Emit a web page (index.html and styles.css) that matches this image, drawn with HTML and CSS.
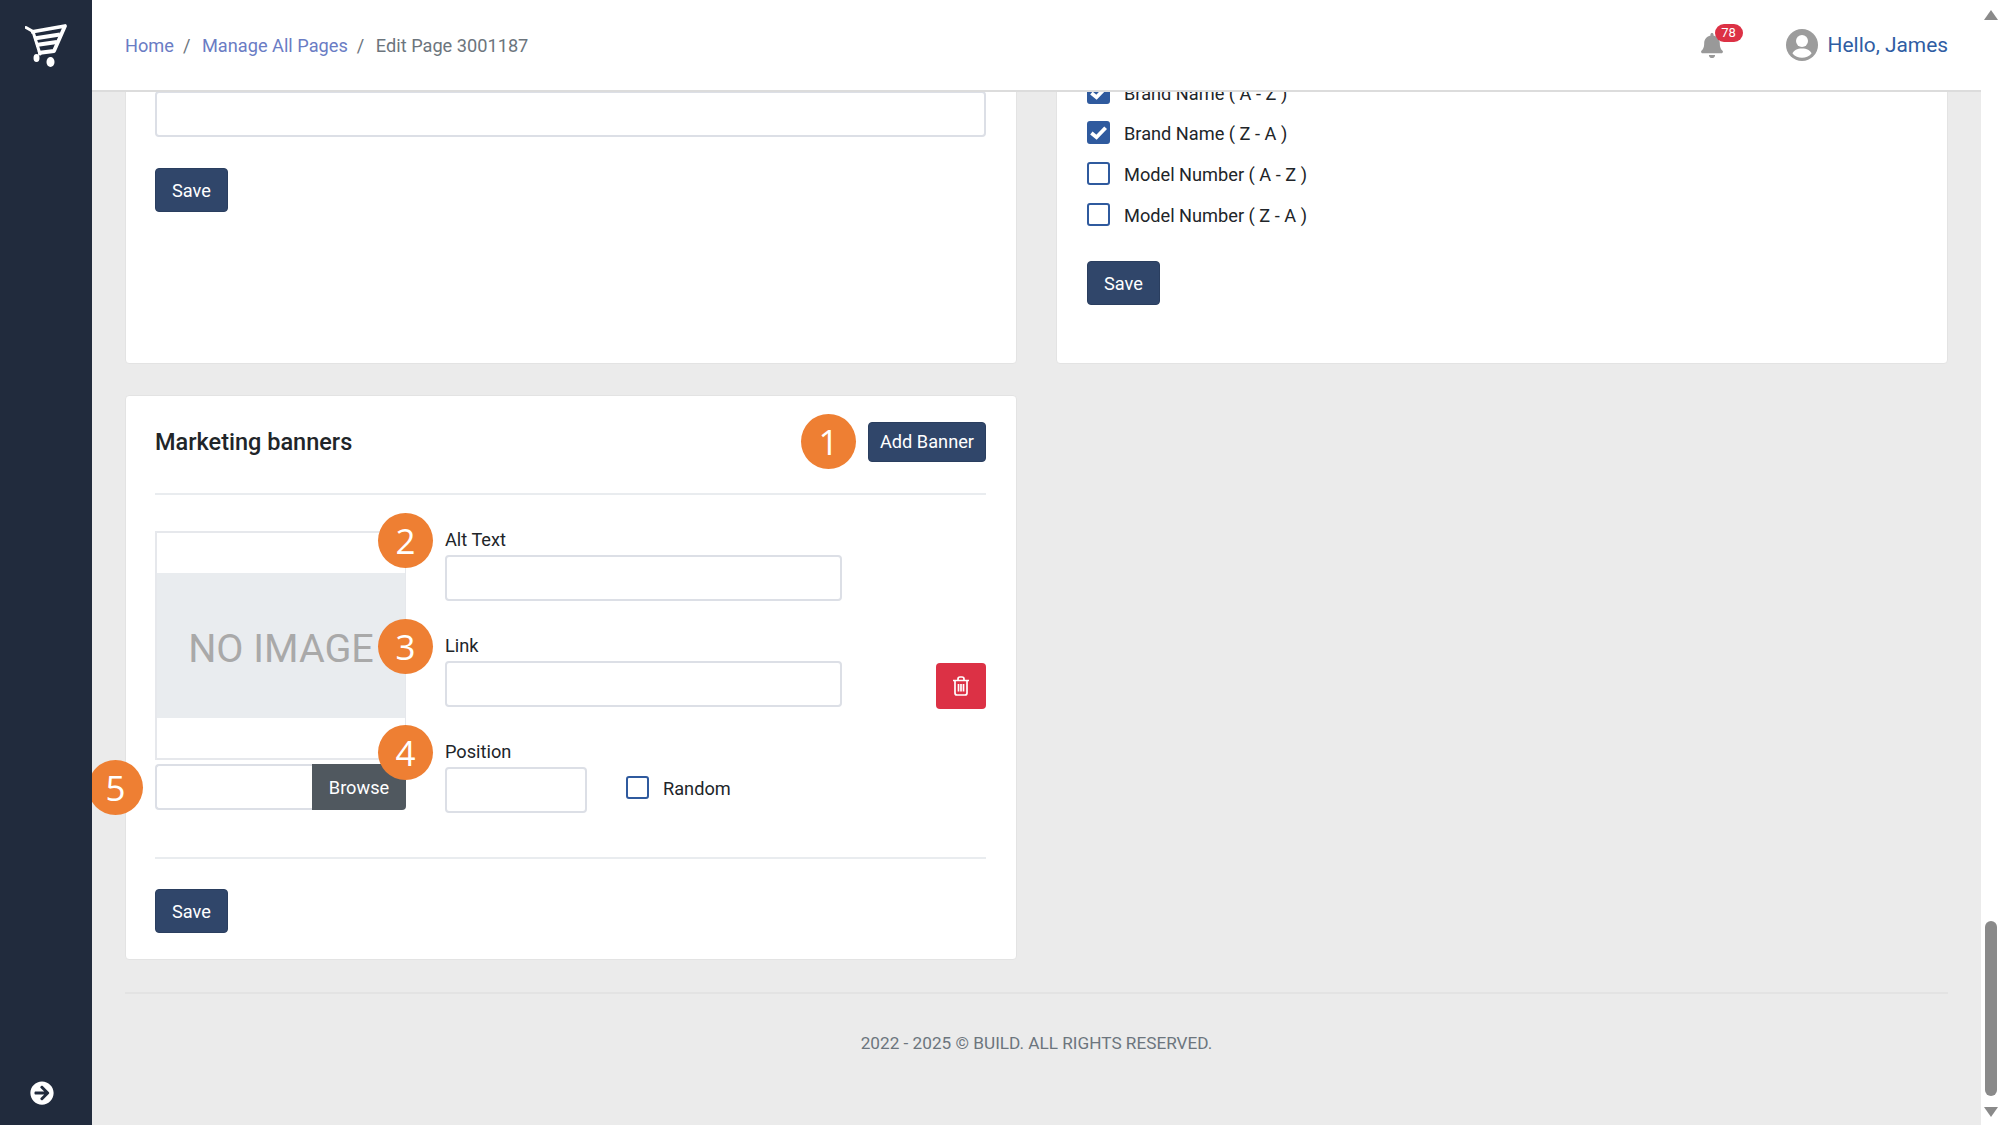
FILE: index.html
```html
<!DOCTYPE html>
<html>
<head>
  <title>Edit Page 3001187</title>
  <link rel="stylesheet" href="styles.css">
</head>
<body>
  <div class="app">
    <aside class="sidebar">
      <svg class="logo" viewBox="0 0 42 44" width="42" height="44">
        <path d="M1 3.5 L8 7.5 L15 30" fill="none" stroke="#fff" stroke-width="3" stroke-linecap="round"/>
        <path d="M6 8 L40 2 L29 27 L13 29" fill="none" stroke="#fff" stroke-width="3.8" stroke-linejoin="round"/>
        <path d="M9 14.5 L35 10.5 M11 21 L32 18" stroke="#fff" stroke-width="4"/>
        <ellipse cx="11.5" cy="34" rx="3" ry="4" fill="#fff"/>
        <ellipse cx="25.5" cy="38" rx="4" ry="5" fill="#fff"/>
      </svg>
      <svg class="expand" viewBox="0 0 512 512" width="24" height="24">
        <path fill="#fff" d="M256 8c137 0 248 111 248 248S393 504 256 504 8 393 8 256 119 8 256 8zm-28.9 143.6l75.5 72.4H120c-13.3 0-24 10.7-24 24v16c0 13.3 10.7 24 24 24h182.6l-75.5 72.4c-9.7 9.3-9.9 24.8-.4 34.3l11 10.9c9.4 9.4 24.6 9.4 33.9 0L404.3 273c9.4-9.4 9.4-24.6 0-33.9L271.6 106.3c-9.4-9.4-24.6-9.4-33.9 0l-11 10.9c-9.3 9.6-9.1 25.1.4 34.4z"/>
      </svg>
    </aside>

    <div class="main">
      <header class="topbar">
        <nav class="breadcrumb">
          <a href="#">Home</a><span class="sep">/</span>
          <a href="#">Manage All Pages</a><span class="sep">/</span>
          <span class="current">Edit Page 3001187</span>
        </nav>
        <div class="topbar-right">
          <div class="bell">
            <svg viewBox="0 0 448 512" width="22" height="25">
              <path fill="#999" d="M224 512c35.32 0 63.97-28.65 63.97-64H160.03c0 35.35 28.65 64 63.97 64zm215.39-149.71c-19.32-20.76-55.47-51.99-55.47-154.29 0-77.7-54.48-139.9-127.94-155.16V32c0-17.67-14.32-32-31.98-32s-31.98 14.33-31.98 32v20.84C118.56 68.1 64.08 130.3 64.08 208c0 102.3-36.15 133.53-55.47 154.29-6 6.45-8.66 14.16-8.61 21.71.11 16.4 12.98 32 32.1 32h383.8c19.12 0 32-15.6 32.1-32 .05-7.55-2.61-15.27-8.61-21.71z"/>
            </svg>
            <span class="bell-count">78</span>
          </div>
          <svg class="avatar" viewBox="0 0 32 32" width="32" height="32">
            <circle cx="16" cy="16" r="16" fill="#9c9c9c"/>
            <circle cx="16" cy="12" r="6" fill="#fff"/>
            <path d="M6.5 24.5 C8 21 11 19.5 16 19.5 C21 19.5 24 21 25.5 24.5 C23 27.5 19.5 28.8 16 28.8 C12.5 28.8 9 27.5 6.5 24.5 Z" fill="#fff"/>
          </svg>
          <a class="user-name" href="#">Hello, James</a>
        </div>
      </header>

      <div class="content">
        <div class="card-grid">
          <section class="card card-top">
            <input class="field" type="text">
            <button class="btn save-top">Save</button>
          </section>

          <section class="card card-top card-sort">
            <div class="sort-list">
              <label class="check-row">
                <span class="check checked"><svg viewBox="0 0 16 16" width="19" height="19"><path d="M2 8.5 L6.3 12 L14 4" fill="none" stroke="#fff" stroke-width="3.2"/></svg></span>
                Brand Name ( A - Z )
              </label>
              <label class="check-row">
                <span class="check checked"><svg viewBox="0 0 16 16" width="19" height="19"><path d="M2 8.5 L6.3 12 L14 4" fill="none" stroke="#fff" stroke-width="3.2"/></svg></span>
                Brand Name ( Z - A )
              </label>
              <label class="check-row"><span class="check"></span>Model Number ( A - Z )</label>
              <label class="check-row"><span class="check"></span>Model Number ( Z - A )</label>
            </div>
            <button class="btn">Save</button>
          </section>

          <section class="card card-banners">
            <div class="card-head">
              <h2>Marketing banners</h2>
              <button class="btn btn-add">Add Banner</button>
            </div>

            <div class="banner-row">
              <div class="banner-image">
                <div class="image-box">
                  <div class="no-image">NO IMAGE</div>
                </div>
                <div class="file-pick">
                  <span class="file-name"></span>
                  <span class="file-browse">Browse</span>
                </div>
              </div>

              <div class="banner-fields">
                <div class="form-group">
                  <label>Alt Text</label>
                  <input class="field" type="text">
                </div>
                <div class="form-group">
                  <label>Link</label>
                  <input class="field" type="text">
                </div>
                <div class="position-row">
                  <div class="form-group">
                    <label>Position</label>
                    <input class="field field-small" type="text">
                  </div>
                  <label class="check-row check-random"><span class="check"></span>Random</label>
                </div>
              </div>

              <button class="btn-delete">
                <svg viewBox="0 0 18 20" width="18" height="20">
                  <path d="M1 4.5 H17 M6 4.5 V3 C6 1.8 6.8 1 8 1 H10 C11.2 1 12 1.8 12 3 V4.5 M3 4.5 V17 C3 18.2 3.8 19 5 19 H13 C14.2 19 15 18.2 15 17 V4.5 M6.5 8 V15.5 M9 8 V15.5 M11.5 8 V15.5" fill="none" stroke="#fff" stroke-width="1.7"/>
                </svg>
              </button>
            </div>

            <button class="btn">Save</button>

            <span class="step step-1">1</span>
            <span class="step step-2">2</span>
            <span class="step step-3">3</span>
            <span class="step step-4">4</span>
            <span class="step step-5">5</span>
          </section>
        </div>

        <footer class="footer">2022 - 2025 © BUILD. ALL RIGHTS RESERVED.</footer>
      </div>
    </div>

    <div class="scrollbar">
      <span class="arrow-up"></span>
      <span class="thumb"></span>
      <span class="arrow-down"></span>
    </div>
  </div>
</body>
</html>
```

FILE: styles.css
```css
* {
  box-sizing: border-box;
}

body, html {
  height: 100%;
  margin: 0;
}

body {
  font-family: Roboto, "Liberation Sans", sans-serif;
  font-size: 18.2px;
  color: #212529;
  overflow: hidden;
}

.app {
  display: flex;
  height: 1125px;
  background: #ebebeb;
}

/* sidebar */
.sidebar {
  width: 92px;
  flex-shrink: 0;
  background: #212b3d;
  display: flex;
  flex-direction: column;
  justify-content: space-between;
  align-items: flex-start;
  padding: 24px 0 20px 25px;
}

.expand {
  margin-left: 5px;
}

/* top bar */
.main {
  flex: 1;
  min-width: 0;
  display: flex;
  flex-direction: column;
}

.topbar {
  height: 92px;
  flex-shrink: 0;
  background: #fff;
  border-bottom: 2px solid #dcdcdc;
  display: flex;
  align-items: center;
  justify-content: space-between;
  padding: 0 33px 0 33px;
  position: relative;
  z-index: 2;
}

.breadcrumb {
  color: #6c757d;
}

.breadcrumb a {
  color: #6a7cc4;
  text-decoration: none;
}

.breadcrumb .sep {
  margin: 0 7px 0 9px;
}

.topbar-right {
  display: flex;
  align-items: center;
}

.bell {
  position: relative;
  display: flex;
  margin-right: 63px;
}

.bell-count {
  position: absolute;
  left: 14px;
  top: -9px;
  width: 28px;
  height: 18px;
  border-radius: 9px;
  background: #dc3145;
  color: #fff;
  font-size: 13px;
  line-height: 18px;
  text-align: center;
}

.user-name {
  margin-left: 10px;
  font-size: 20.9px;
  color: #2f5da3;
  text-decoration: none;
}

/* scrolled area */
.content {
  flex: 1;
  min-height: 0;
  overflow: hidden;
  padding: 0 33px;
}

.card-grid {
  display: grid;
  grid-template-columns: 892px 892px;
  column-gap: 39px;
  row-gap: 31px;
  margin-top: -32px;
}

.card {
  background: #fff;
  border: 1px solid #e3e3e3;
  border-radius: 4px;
  padding: 30px 30px 0 29px;
}

.card-top {
  height: 304px;
}

.card-sort {
  padding-left: 30px;
}

.field {
  display: block;
  width: 100%;
  height: 46px;
  background: #fff;
  border: 2px solid #dcdfe6;
  border-radius: 4px;
  outline: none;
}

.field-small {
  width: 142px;
}

.btn {
  display: block;
  height: 44px;
  padding: 0 16px;
  background: #30466a;
  border: 1px solid #2a3e5f;
  border-radius: 4px;
  color: #fff;
  font-family: inherit;
  font-size: 18.2px;
}

.save-top {
  margin-top: 31px;
}

/* sort options */
.sort-list {
  margin-top: -10px;
  margin-bottom: 34px;
}

.check-row {
  display: flex;
  align-items: center;
  height: 24px;
  margin-bottom: 16.7px;
  color: #212529;
}

.check {
  width: 23px;
  height: 23px;
  margin-right: 14px;
  margin-bottom: 2px;
  border: 2px solid #2f5a9e;
  border-radius: 3px;
  background: #fff;
  display: flex;
  align-items: center;
  justify-content: center;
  flex-shrink: 0;
}

.check.checked {
  background: #2f5a9e;
}

/* marketing banners */
.card-banners {
  position: relative;
  padding-top: 26px;
  padding-bottom: 24px;
  height: 565px;
}

.card-head {
  display: flex;
  align-items: center;
  justify-content: space-between;
  height: 73px;
  padding-bottom: 32px;
  border-bottom: 2px solid #e9ecef;
}

.card-head h2 {
  margin: 0;
  font-size: 23.5px;
  font-weight: 500;
  color: #212529;
}

.btn-add {
  height: 40px;
  padding: 0 11px;
}

.banner-row {
  display: flex;
  align-items: flex-start;
  margin-top: 36px;
  height: 328px;
  margin-bottom: 30px;
  border-bottom: 2px solid #e9ecef;
}

.banner-image {
  width: 251px;
  flex-shrink: 0;
  margin-right: 39px;
}

.image-box {
  height: 229px;
  border: 2px solid #e6e8ec;
  border-right-width: 1px;
  display: flex;
  align-items: center;
}

.no-image {
  width: 100%;
  height: 145px;
  padding-top: 5px;
  background: #e9ecef;
  color: #a9a9a9;
  font-size: 39.5px;
  display: flex;
  align-items: center;
  justify-content: center;
}

.file-pick {
  display: flex;
  height: 46px;
  margin-top: 4px;
}

.file-name {
  flex: 1;
  border: 2px solid #dcdfe6;
  border-right: 0;
  border-radius: 4px 0 0 4px;
}

.file-browse {
  width: 94px;
  background: #50585f;
  border-radius: 0 4px 4px 0;
  color: #fff;
  display: flex;
  align-items: center;
  justify-content: center;
}

.banner-fields {
  width: 397px;
  margin-top: -3px;
}

.form-group {
  margin-bottom: 33px;
}

.form-group label {
  display: block;
  height: 24px;
  line-height: 24px;
  margin-bottom: 3px;
}

.position-row {
  display: flex;
  align-items: flex-start;
}

.position-row .form-group {
  margin-bottom: 0;
}

.check-random {
  margin: 36px 0 0 39px;
}

.btn-delete {
  width: 50px;
  height: 46px;
  margin: 132px 0 0 auto;
  background: #dc3145;
  border: 0;
  border-radius: 4px;
  display: flex;
  align-items: center;
  justify-content: center;
  padding: 0;
}

/* numbered callouts */
.step {
  position: absolute;
  width: 55px;
  height: 55px;
  border-radius: 50%;
  background: #ee7f33;
  color: #fff;
  font-family: "Open Sans", sans-serif;
  font-size: 35px;
  line-height: 55px;
  text-align: center;
}

.step-1 { left: 675px; top: 18px; }
.step-2 { left: 252px; top: 117px; }
.step-3 { left: 252px; top: 223px; }
.step-4 { left: 252px; top: 329px; }
.step-5 { left: -38px; top: 364px; }

/* footer */
.footer {
  margin-top: 32px;
  border-top: 2px solid #e3e3e3;
  padding-top: 37px;
  text-align: center;
  color: #6c757d;
  font-size: 17.2px;
  line-height: 24px;
}

/* page scrollbar */
.scrollbar {
  width: 19px;
  flex-shrink: 0;
  background: #fff;
  display: flex;
  flex-direction: column;
  align-items: center;
  padding-top: 10px;
}

.arrow-up, .arrow-down {
  width: 0;
  height: 0;
  border-left: 7px solid transparent;
  border-right: 7px solid transparent;
}

.arrow-up {
  border-bottom: 10px solid #8a8a8a;
}

.arrow-down {
  margin-top: 11px;
  border-top: 10px solid #8a8a8a;
}

.thumb {
  width: 12px;
  height: 175px;
  margin-top: 901px;
  border-radius: 6px;
  background: #8a8a8a;
}
```
